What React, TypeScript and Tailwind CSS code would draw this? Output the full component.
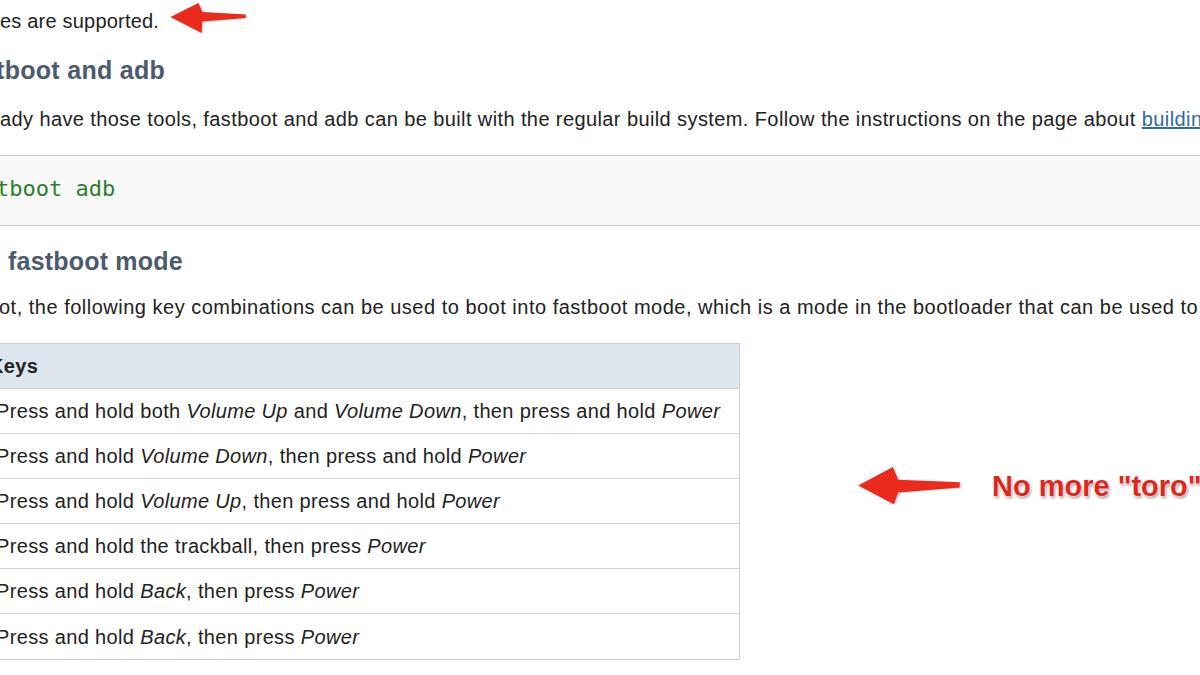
// Screenshot of a docs page: fastboot and adb section, with red annotations

const rows: { parts: { t: string; i?: boolean }[] }[] = [
  {
    parts: [
      { t: "Press and hold both " },
      { t: "Volume Up", i: true },
      { t: " and " },
      { t: "Volume Down", i: true },
      { t: ", then press and hold " },
      { t: "Power", i: true },
    ],
  },
  {
    parts: [
      { t: "Press and hold " },
      { t: "Volume Down", i: true },
      { t: ", then press and hold " },
      { t: "Power", i: true },
    ],
  },
  {
    parts: [
      { t: "Press and hold " },
      { t: "Volume Up", i: true },
      { t: ", then press and hold " },
      { t: "Power", i: true },
    ],
  },
  {
    parts: [{ t: "Press and hold the trackball, then press " }, { t: "Power", i: true }],
  },
  {
    parts: [
      { t: "Press and hold " },
      { t: "Back", i: true },
      { t: ", then press " },
      { t: "Power", i: true },
    ],
  },
  {
    parts: [
      { t: "Press and hold " },
      { t: "Back", i: true },
      { t: ", then press " },
      { t: "Power", i: true },
    ],
  },
];

function Arrow({ className, d }: { className: string; d: string }) {
  return (
    <svg className={className} viewBox="0 0 100 100" preserveAspectRatio="none">
      <defs>
        <filter id="sh" x="-10%" y="-30%" width="130%" height="170%">
          <feDropShadow dx="1" dy="1.5" stdDeviation="1.2" floodColor="#000" floodOpacity="0.25" />
        </filter>
      </defs>
      <path d={d} fill="#ea2a1f" filter="url(#sh)" />
    </svg>
  );
}

export default function App() {
  return (
    <div className="relative w-[1200px] h-[675px] overflow-hidden bg-white text-[#222] font-['Liberation_Sans',Arial,sans-serif] whitespace-nowrap">
      {/* 本文 */}
      <p className="h-[42px] leading-[42px] text-[20px] tracking-[0.2px]">es are supported.</p>

      <h2 className="h-[56px] leading-[56px] text-[25px] font-bold tracking-[0.3px] text-[#4b5b6d] -ml-[4px]">
        tboot and adb
      </h2>

      <p className="h-[42px] leading-[42px] text-[20px] tracking-[0.4px]">
        ady have those tools, fastboot and adb can be built with the regular build system. Follow the instructions on the page about{" "}
        <a className="text-[#2a6ba3] underline">building</a>
      </p>

      {/* コードブロック */}
      <div className="mt-[15px] h-[71px] border-y border-[#c9c9c9] bg-[#f8f8f8] flex items-center pb-[4px]">
        <code className="-ml-[4px] text-[22px] text-[#2f7d2f] font-['DejaVu_Sans_Mono',monospace]">
          tboot adb
        </code>
      </div>

      <h2 className="mt-[10px] h-[50px] leading-[50px] text-[25px] font-bold tracking-[0.2px] text-[#4b5b6d] pl-[8px]">
        fastboot mode
      </h2>

      <p className="h-[42px] leading-[42px] text-[20px] tracking-[0.5px] -ml-[1px]">
        ot, the following key combinations can be used to boot into fastboot mode, which is a mode in the bootloader that can be used to
      </p>

      {/* テーブル */}
      <div className="mt-[15px] w-[760px] -ml-[20px] border border-[#cfcfcf] text-[20px] tracking-[0.35px]">
        <div className="h-[45px] flex items-center bg-[#dde5ee] border-b border-[#cfcfcf] pl-[8px] font-bold">
          Keys
        </div>
        {rows.map((r, idx) => (
          <div
            key={idx}
            className="h-[45px] flex items-center pl-[15px] border-b border-[#d4d4d4] last:border-b-0"
          >
            {r.parts.map((p, j) =>
              p.i ? (
                <em key={j} className="italic whitespace-pre">
                  {p.t}
                </em>
              ) : (
                <span key={j} className="whitespace-pre">
                  {p.t}
                </span>
              )
            )}
          </div>
        ))}
      </div>

      {/* 注釈 */}
      <Arrow
        className="absolute left-[168px] top-[1px] w-[80px] h-[34px]"
        d="M3 47 L38 6 L43 32 L97 40 L97 50 L43 60 L42 94 Z"
      />
      <Arrow
        className="absolute left-[855px] top-[465px] w-[108px] h-[41px]"
        d="M3 50 L35 5 L40 36 L97 42 L97 55 L40 67 L36 96 Z"
      />
      <div className="absolute left-[992px] top-[465px] text-[29px] font-bold tracking-[0px] text-[#e3261c] [text-shadow:0_0_2px_#fff,0_0_2px_#fff,1px_2px_3px_rgba(0,0,0,0.45)]">
        No more "toro"
      </div>
    </div>
  );
}
